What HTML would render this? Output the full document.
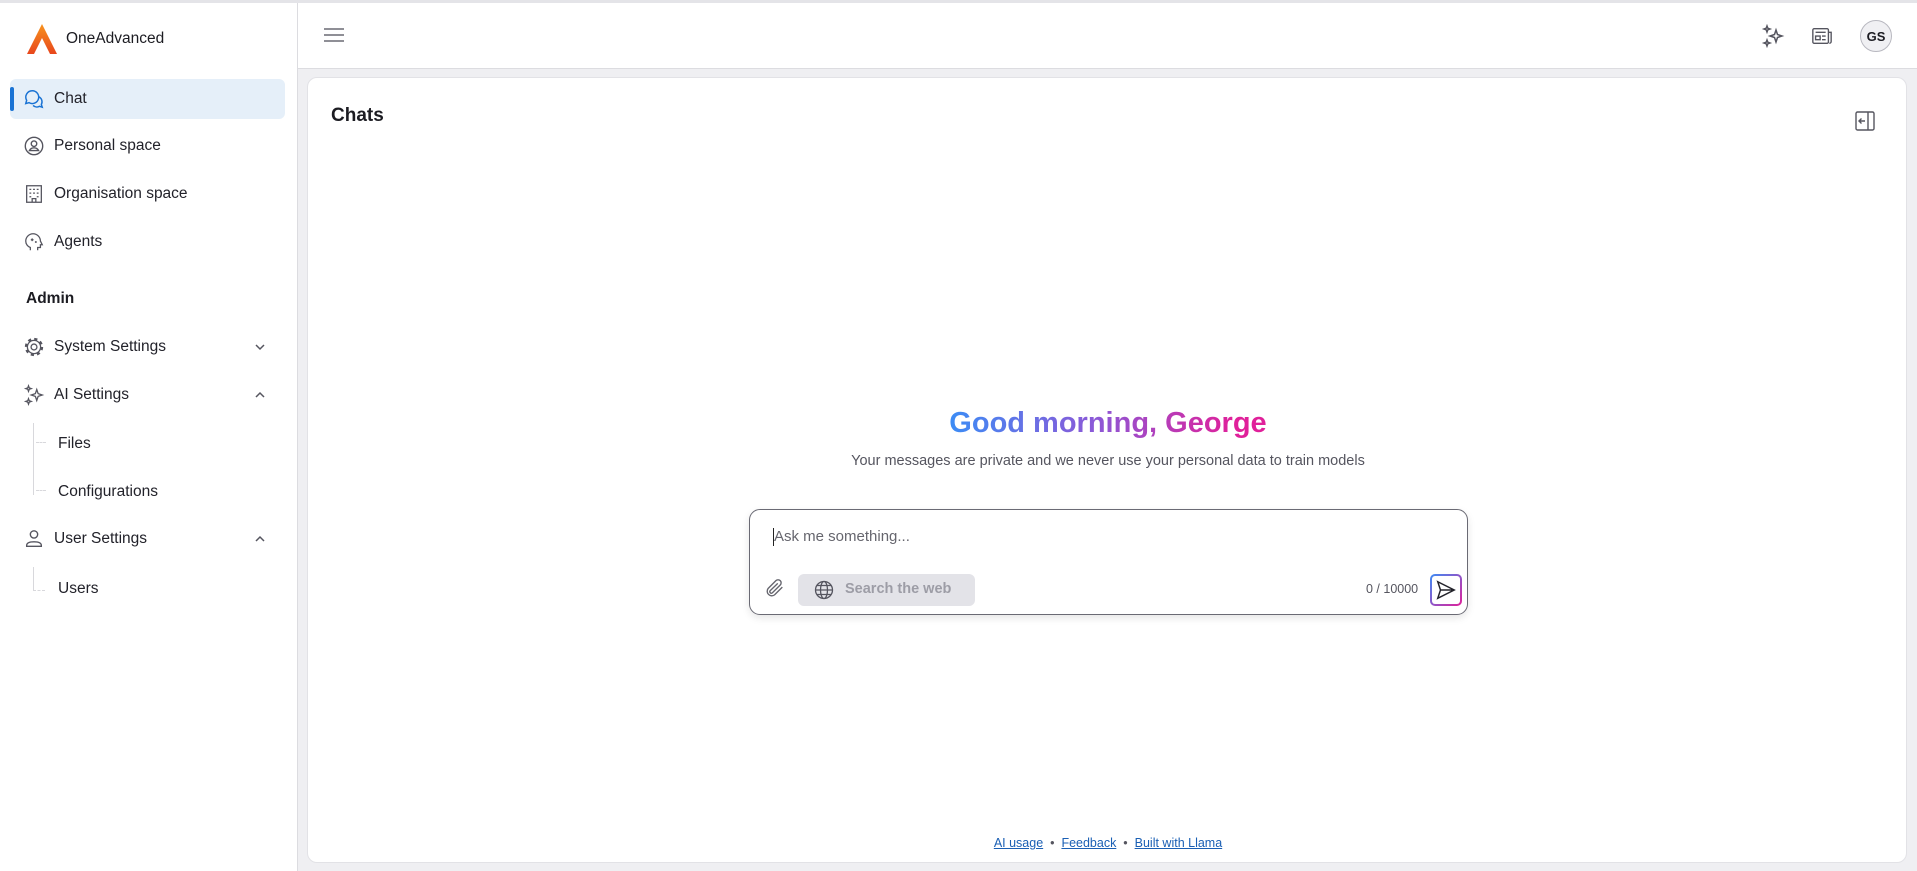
<!DOCTYPE html>
<html><head><meta charset="utf-8"><style>
*{box-sizing:border-box;margin:0;padding:0}
body{width:1917px;height:871px;overflow:hidden;font-family:"Liberation Sans",sans-serif;background:#efeff2;position:relative;color:#1c1c22}
.top{position:absolute;left:0;top:0;width:1917px;height:3px;background:#e4e4e8}
.side{position:absolute;left:0;top:3px;width:298px;height:868px;background:#fff;border-right:1px solid #dcdce0}
.hdr{position:absolute;left:298px;top:3px;right:0;height:66px;background:#fff;border-bottom:1px solid #dcdce0}
.card{position:absolute;left:307px;top:77px;width:1600px;height:786px;background:#fff;border-radius:10px;border:1px solid #e2e2e6}
.it{position:absolute;left:10px;width:275px;height:40px;display:flex;align-items:center;font-size:15.5px;color:#22222a}
.it svg.ic{position:absolute;left:13px;width:22px;height:22px}
.it span{position:absolute;left:44px}
.sel{background:#e5eff9;border-radius:6px}
.sel:before{content:"";position:absolute;left:0;top:8px;width:4px;height:24px;background:#1a73d4;border-radius:2px}
.chev{position:absolute;right:18px;top:13px;width:14px;height:14px}
.sub{position:absolute;left:58px;font-size:15.5px;color:#22222a}
.a{color:#1a5fb4;text-decoration:underline}
</style></head><body>
<div class="top"></div>
<div class="side">
 <svg style="position:absolute;left:26px;top:20px" width="32" height="32" viewBox="0 0 32 32"><defs><linearGradient id="lg" x1="0" y1="0" x2="0" y2="1"><stop offset="0" stop-color="#f7931e"/><stop offset="1" stop-color="#e8461c"/></linearGradient></defs><path d="M16 1 L31 31 L24 31 L16 15 L8 31 L1 31 Z" fill="url(#lg)"/></svg>
 <div style="position:absolute;left:66px;top:27px;font-size:15.5px">OneAdvanced</div>
 <div class="it sel" style="top:76px"><svg class="ic" viewBox="0 0 24 24" fill="none" stroke="#1a73d4" stroke-width="1.6"><path d="M10 3a7 7 0 0 0-6 10.5L3 17l3.5-1A7 7 0 1 0 10 3z"/><path d="M17 9.5a6 6 0 0 1 3 8.5l1 3-3-1a6 6 0 0 1-7-1"/></svg><span>Chat</span></div>
 <div class="it" style="top:123px"><svg class="ic" viewBox="0 0 24 24" fill="none" stroke="#55555f" stroke-width="1.5"><circle cx="12" cy="12" r="9.5"/><circle cx="12" cy="9.5" r="3"/><path d="M7 17c1-2 3-3 5-3s4 1 5 3z"/></svg><span>Personal space</span></div>
 <div class="it" style="top:171px"><svg class="ic" viewBox="0 0 24 24" fill="none" stroke="#55555f" stroke-width="1.4"><rect x="4" y="3" width="16" height="18"/><path d="M7 7h2M11 7h2M15 7h2M7 11h2M11 11h2M15 11h2M7 15h2M15 15h2M10 21v-4h4v4"/></svg><span>Organisation space</span></div>
 <div class="it" style="top:219px"><svg class="ic" viewBox="0 0 24 24" fill="none" stroke="#55555f" stroke-width="1.4"><path d="M8 21v-3c-3-1-5-4-5-7a8 8 0 0 1 16 0l2 4h-2v3h-3v3"/><path d="M10 8v3M8.5 9.5h3M14 11v2M13 12h2"/></svg><span>Agents</span></div>
 <div style="position:absolute;left:26px;top:287px;font-size:15.5px;font-weight:bold">Admin</div>
 <div class="it" style="top:324px"><svg class="ic" viewBox="0 0 24 24" fill="none" stroke="#55555f" stroke-width="1.4"><circle cx="12" cy="12" r="3.2"/><circle cx="12" cy="12" r="7.2"/><circle cx="12" cy="12" r="8.6" stroke-width="2.8" stroke-dasharray="3.4 3.35"/></svg><span>System Settings</span><svg class="chev" viewBox="0 0 14 14" fill="none" stroke="#55555f" stroke-width="1.5"><path d="M3 5l4 4 4-4"/></svg></div>
 <div class="it" style="top:372px"><svg class="ic" viewBox="0 0 24 24" fill="none" stroke="#55555f" stroke-width="1.4"><path d="M15 6l1.5 4.5L21 12l-4.5 1.5L15 18l-1.5-4.5L9 12l4.5-1.5z"/><path d="M6 2l.8 2.2L9 5l-2.2.8L6 8l-.8-2.2L3 5l2.2-.8zM6 16l.8 2.2L9 19l-2.2.8L6 22l-.8-2.2L3 19l2.2-.8z"/></svg><span>AI Settings</span><svg class="chev" viewBox="0 0 14 14" fill="none" stroke="#55555f" stroke-width="1.5"><path d="M3 9l4-4 4 4"/></svg></div>
 <div style="position:absolute;left:33px;top:420px;width:12px;height:72px;border-left:1px solid #d8d8dc"></div>
 <div style="position:absolute;left:36px;top:439px;width:10px;border-top:1px dashed #d8d8dc"></div>
 <div style="position:absolute;left:36px;top:487px;width:10px;border-top:1px dashed #d8d8dc"></div>
 <div class="sub" style="top:432px">Files</div>
 <div class="sub" style="top:480px">Configurations</div>
 <div class="it" style="top:516px"><svg class="ic" viewBox="0 0 24 24" fill="none" stroke="#55555f" stroke-width="1.5"><circle cx="12" cy="7" r="4"/><path d="M4 19c0-3 4-4 8-4s8 1 8 4v1H4z"/></svg><span>User Settings</span><svg class="chev" viewBox="0 0 14 14" fill="none" stroke="#55555f" stroke-width="1.5"><path d="M3 9l4-4 4 4"/></svg></div>
 <div style="position:absolute;left:33px;top:564px;width:12px;height:24px;border-left:1px solid #d8d8dc;border-bottom:1px dashed #d8d8dc"></div>
 <div class="sub" style="top:577px">Users</div>
</div>
<div class="hdr">
 <svg style="position:absolute;left:26px;top:24px" width="20" height="16" viewBox="0 0 20 16" stroke="#6a6a74" stroke-width="1.6"><path d="M0 2h20M0 8h20M0 14h20"/></svg>
 <svg style="position:absolute;left:1463px;top:21px" width="24" height="24" viewBox="0 0 24 24" fill="none" stroke="#55555f" stroke-width="1.5"><path d="M15 6l1.5 4.5L21 12l-4.5 1.5L15 18l-1.5-4.5L9 12l4.5-1.5z"/><path d="M6 2l.8 2.2L9 5l-2.2.8L6 8l-.8-2.2L3 5l2.2-.8zM6 16l.8 2.2L9 19l-2.2.8L6 22l-.8-2.2L3 19l2.2-.8z"/></svg>
 <svg style="position:absolute;left:1513px;top:22px" width="22" height="22" viewBox="0 0 24 24" fill="none" stroke="#55555f" stroke-width="1.5"><rect x="2" y="4" width="17" height="16" rx="1.5"/><path d="M19 8h3v10a2 2 0 0 1-2 2M5 8h11M5 12h5v4H5zM12 12h4M12 16h4"/></svg>
 <div style="position:absolute;left:1562px;top:17px;width:32px;height:32px;border-radius:50%;border:1px solid #b8b8c0;background:#f0f0f3;font-size:13px;font-weight:bold;display:flex;align-items:center;justify-content:center">GS</div>
</div>
<div class="card">
 <div style="position:absolute;left:23px;top:27px;font-size:19px;font-weight:bold">Chats</div>
 <svg style="position:absolute;left:1547px;top:33px" width="20" height="20" viewBox="0 0 20 20" fill="none" stroke="#55555f" stroke-width="1.4"><rect x="1" y="1" width="18" height="18" rx="1.5"/><path d="M13 1v18M10 10H4M6.5 7.5L4 10l2.5 2.5"/></svg>
 <div style="position:absolute;left:0;width:1600px;top:329px;text-align:center;font-size:29px;font-weight:bold"><span style="background:linear-gradient(90deg,#3c8cf5,#8a5ad8 45%,#e0209a 90%);-webkit-background-clip:text;background-clip:text;color:transparent">Good morning, George</span></div>
 <div style="position:absolute;left:0;width:1600px;top:375px;text-align:center;font-size:14.5px;color:#55555f">Your messages are private and we never use your personal data to train models</div>
 <div style="position:absolute;left:441px;top:431px;width:719px;height:106px;border:1px solid #6a6a74;border-radius:11px;box-shadow:0 3px 8px rgba(0,0,0,.1);background:#fff">
  <div style="position:absolute;left:23px;top:18px;width:1px;height:18px;background:#222"></div>
  <div style="position:absolute;left:24px;top:18px;font-size:15px;color:#66666e">Ask me something...</div>
  <svg style="position:absolute;left:14px;top:67px" width="22" height="22" viewBox="0 0 24 24" fill="none" stroke="#66666e" stroke-width="1.5"><path d="M20 11l-8.5 8.5a5 5 0 0 1-7-7L13 4a3.3 3.3 0 0 1 4.7 4.7l-8.5 8.5a1.7 1.7 0 0 1-2.4-2.4L15 7"/></svg>
  <div style="position:absolute;left:48px;top:64px;width:177px;height:32px;background:#e3e3e8;border-radius:6px">
   <svg style="position:absolute;left:16px;top:6px" width="20" height="20" viewBox="0 0 20 20" fill="none" stroke="#55555f" stroke-width="1.3"><circle cx="10" cy="10" r="8.5"/><ellipse cx="10" cy="10" rx="3.5" ry="8.5"/><path d="M1.5 10h17M3 5.5h14M3 14.5h14"/></svg>
   <div style="position:absolute;left:47px;top:7px;font-size:14.5px;font-weight:bold;color:#9d9da6">Search the web</div>
  </div>
  <div style="position:absolute;left:616px;top:72px;font-size:12.5px;color:#55555f">0 / 10000</div>
  <div style="position:absolute;left:680px;top:64px;width:32px;height:32px;border-radius:5px;background:linear-gradient(135deg,#3c8cf5,#e0209a);padding:2px"><div style="width:100%;height:100%;background:#fff;border-radius:3px;position:relative"><svg style="position:absolute;left:3px;top:3px" width="22" height="22" viewBox="0 0 24 24" fill="none" stroke="#22222a" stroke-width="1.6"><path d="M3 3l18 9-18 9 3-9zM6 12h15"/></svg></div></div>
 </div>
 <div style="position:absolute;left:0;width:1600px;top:758px;text-align:center;font-size:12.5px;color:#55555f"><span class="a">AI usage</span> &nbsp;•&nbsp; <span class="a">Feedback</span> &nbsp;•&nbsp; <span class="a">Built with Llama</span></div>
</div>
</body></html>
